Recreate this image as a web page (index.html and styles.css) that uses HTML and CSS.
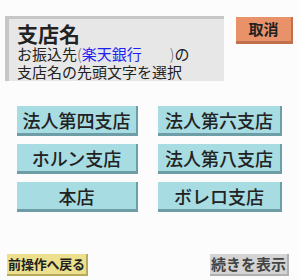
FILE: index.html
```html
<!DOCTYPE html>
<html lang="ja">
	<head>
		<meta charset="UTF-8" />
		<meta name="viewport" content="width=device-width, initial-scale=1.0" />
		<title>支店名選択</title>
		<link rel="stylesheet" href="styles.css">
	</head>
	<body>
		<main>
			<div class="top">
				<div class="head">
					<h1>支店名</h1>
					<p>お振込先<span class="paren">(</span><span class="bank">楽天銀行</span><span class="space"></span><span class="paren">)</span>の</p>
					<p>支店名の先頭文字を選択</p>
				</div>
				<button class="cancel">取消</button>
			</div>

			<ul class="branches">
				<li><button>法人第四支店</button></li>
				<li><button>法人第六支店</button></li>
				<li><button>ホルン支店</button></li>
				<li><button>法人第八支店</button></li>
				<li><button>本店</button></li>
				<li><button>ボレロ支店</button></li>
			</ul>

			<div class="bottom">
				<button class="back">前操作へ戻る</button>
				<button class="more">続きを表示</button>
			</div>
		</main>
	</body>
</html>
```

FILE: styles.css
```css
* {
	padding: 0;
	margin: 0;
	box-sizing: border-box;
}
ul {
	list-style: none;
}
body {
	width: 300px;
	height: 280px;
	background-color: #fcfcfc;
	font-family: "Noto Sans CJK JP", "DejaVu Sans", sans-serif;
	color: #222;
}
button {
	font-family: inherit;
	color: #222;
	cursor: pointer;
	border: none;
	padding: 0;
}

main {
	padding: 16px 7px 0 5px;
}

.top {
	display: flex;
	justify-content: space-between;
	align-items: flex-start;
}
.head {
	width: 219px;
	height: 65px;
	background-color: #e7e7e7;
	border-top: 3px solid #c6c6c6;
	border-left: 4px solid #c6c6c6;
	padding: 2px 0 0 8px;
}
.head h1 {
	font-size: 21px;
	font-weight: bold;
	line-height: 24px;
}
.head p {
	font-size: 15px;
	line-height: 18px;
	height: 18px;
}
.head p span {
	display: inline-block;
	vertical-align: top;
	height: 18px;
}
.bank {
	color: #1f1ff5;
}
.paren {
	color: #666;
	font-weight: 300;
}
.space {
	width: 28px;
}

.cancel {
	width: 57px;
	height: 27px;
	margin-top: 1px;
	background-color: #e9926a;
	border-right: 2px solid #c0704c;
	border-bottom: 3px solid #c0704c;
	font-size: 15px;
	font-weight: bold;
	line-height: 22px;
}

.branches {
	display: grid;
	grid-template-columns: 121px 124px;
	column-gap: 20px;
	row-gap: 8px;
	margin: 25px 0 0 12px;
}
.branches button {
	width: 100%;
	height: 30px;
	background-color: #a7dce2;
	border-right: 2px solid #6d9ea7;
	border-bottom: 3px solid #6d9ea7;
	font-size: 18px;
	font-weight: 500;
	line-height: 26px;
}

.bottom {
	display: flex;
	justify-content: space-between;
	margin: 42px 4px 0 2px;
}
.back {
	width: 81px;
	height: 22px;
	background-color: #ece08e;
	border-right: 2px solid #b8aa5a;
	border-bottom: 2px solid #b8aa5a;
	font-size: 13px;
	font-weight: bold;
	line-height: 20px;
	letter-spacing: -0.2px;
}
.more {
	width: 79px;
	height: 22px;
	background-color: #d4d4d4;
	border-right: 2px solid #b0b0b0;
	border-bottom: 2px solid #b0b0b0;
	font-size: 15px;
	font-weight: bold;
	color: #444;
	line-height: 20px;
}
```
